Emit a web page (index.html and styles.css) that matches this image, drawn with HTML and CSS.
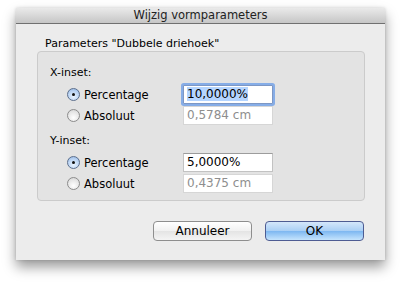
FILE: index.html
```html
<!DOCTYPE html>
<html lang="nl">
<head>
  <meta charset="UTF-8">
  <title>Wijzig vormparameters</title>
  <link rel="stylesheet" href="styles.css">
</head>
<body>
  <div class="window">
    <div class="titlebar">Wijzig vormparameters</div>
    <div class="content">
      <div class="group-title">Parameters "Dubbele driehoek"</div>
      <div class="group">
        <div class="section-label">X-inset:</div>
        <div class="option">
          <span class="radio checked"></span>
          <span class="option-label">Percentage</span>
          <span class="field focused"><span class="selection">10,0000%</span></span>
        </div>
        <div class="option">
          <span class="radio"></span>
          <span class="option-label">Absoluut</span>
          <span class="field disabled">0,5784 cm</span>
        </div>

        <div class="section-label second">Y-inset:</div>
        <div class="option">
          <span class="radio checked"></span>
          <span class="option-label">Percentage</span>
          <span class="field">5,0000%</span>
        </div>
        <div class="option">
          <span class="radio"></span>
          <span class="option-label">Absoluut</span>
          <span class="field disabled">0,4375 cm</span>
        </div>
      </div>
      <div class="buttons">
        <button class="btn">Annuleer</button>
        <button class="btn default">OK</button>
      </div>
    </div>
  </div>
</body>
</html>
```

FILE: styles.css
```css
html {
  background-color: #fff;
}

body {
  margin: 0;
  min-height: 285px;
  box-sizing: border-box;
  padding: 8px 0 0 16px;
  font-family: 'Lucida Grande', 'DejaVu Sans', sans-serif;
  font-size: 11px;
  color: #000;
}

.window {
  width: 369px;
  height: 252px;
  background-color: #ececec;
  box-shadow: 0 7px 12px rgba(0, 0, 0, 0.4), 0 0 3px rgba(0, 0, 0, 0.15);
}

.titlebar {
  height: 15px;
  line-height: 15px;
  font-size: 11.5px;
  text-align: center;
  color: #222;
  background: linear-gradient(#eaeaea, #c6c6c6);
  border-bottom: 1px solid #707070;
}

.content {
  padding: 12px 20px 0 21px;
}

.group-title {
  height: 15px;
  line-height: 15px;
  padding-left: 8px;
}

.group {
  box-sizing: border-box;
  height: 150px;
  border: 1px solid #cbcbcb;
  border-radius: 4px;
  background-color: #e3e3e3;
  padding: 13px 0 0 12px;
}

.section-label {
  line-height: 15px;
  margin-bottom: 4px;
}

.section-label.second {
  margin-top: 7px;
}

.option {
  display: flex;
  align-items: center;
  height: 21px;
}

.radio {
  width: 11px;
  height: 11px;
  border: 1px solid #8c8c8c;
  border-radius: 50%;
  background: radial-gradient(circle at 50% 70%, #ffffff, #e6e6e6 60%, #cfcfcf);
  margin-left: 17px;
  margin-right: 4px;
  position: relative;
}

.radio.checked {
  border-color: #5c6f8d;
  background: radial-gradient(circle at 50% 70%, #e9f3ff, #b9d3f3 60%, #8fb2e0);
}

.radio.checked::after {
  content: '';
  position: absolute;
  left: 4px;
  top: 4px;
  width: 3px;
  height: 3px;
  border-radius: 50%;
  background-color: #111;
}

.option-label {
  width: 99px;
  font-size: 11.5px;
}

.field {
  box-sizing: border-box;
  width: 90px;
  height: 19px;
  line-height: 17px;
  padding-left: 3px;
  font-size: 12px;
  background-color: #fff;
  border: 1px solid #c2c2c2;
  border-top-color: #9c9c9c;
}

.field.focused {
  border-color: #7d97c4;
  box-shadow: 0 0 0 2px #86ade7;
  border-radius: 1px;
}

.field.disabled {
  color: #8e8e8e;
  border-color: #d6d6d6;
}

.selection {
  background-color: #b5d5ff;
}

.buttons {
  display: flex;
  justify-content: flex-end;
  gap: 13px;
  margin-top: 20px;
  margin-right: 1px;
}

.btn {
  width: 99px;
  height: 20px;
  font-family: inherit;
  font-size: 12px;
  border: 1px solid #8e8e8e;
  border-radius: 4px;
  background: linear-gradient(#ffffff, #f1f1f1 50%, #e4e4e4 51%, #f4f4f4);
  padding: 0;
  color: #000;
}

.btn.default {
  border-color: #4e5c92;
  background: linear-gradient(#d4e7fb, #a9cff5 50%, #7db7f1 51%, #c5e4fd);
}
```
